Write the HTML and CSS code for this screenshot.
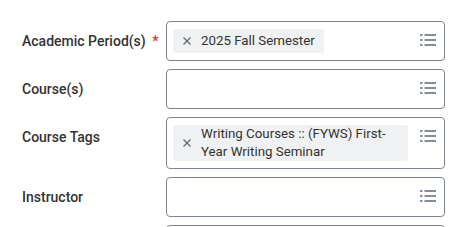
FILE: index.html
```html
<!DOCTYPE html>
<html>
<head>
<meta charset="utf-8">
<link rel="stylesheet" href="styles.css">
</head>
<body>
<div class="form">
  <div class="label">Academic Period(s) <span class="req">*</span></div>
  <div class="input">
    <div class="chips">
      <div class="chip"><svg class="x" viewBox="0 0 8 8" width="8" height="8"><path d="M0.5 0.5L7.5 7.5M7.5 0.5L0.5 7.5" stroke="#5e6a75" stroke-width="1.3"/></svg><span class="chip-text">2025 Fall Semester</span></div>
    </div>
    <svg class="list" viewBox="0 0 16 16" width="16" height="16"><g fill="#5e6a75"><rect x="0" y="2.25" width="2.5" height="1.5"/><rect x="4.5" y="2.25" width="11.5" height="1.5"/><rect x="0" y="7.25" width="2.5" height="1.5"/><rect x="4.5" y="7.25" width="11.5" height="1.5"/><rect x="0" y="12.25" width="2.5" height="1.5"/><rect x="4.5" y="12.25" width="11.5" height="1.5"/></g></svg>
  </div>

  <div class="label">Course(s)</div>
  <div class="input">
    <div class="chips"></div>
    <svg class="list" viewBox="0 0 16 16" width="16" height="16"><g fill="#5e6a75"><rect x="0" y="2.25" width="2.5" height="1.5"/><rect x="4.5" y="2.25" width="11.5" height="1.5"/><rect x="0" y="7.25" width="2.5" height="1.5"/><rect x="4.5" y="7.25" width="11.5" height="1.5"/><rect x="0" y="12.25" width="2.5" height="1.5"/><rect x="4.5" y="12.25" width="11.5" height="1.5"/></g></svg>
  </div>

  <div class="label">Course Tags</div>
  <div class="input">
    <div class="chips">
      <div class="chip"><svg class="x" viewBox="0 0 8 8" width="8" height="8"><path d="M0.5 0.5L7.5 7.5M7.5 0.5L0.5 7.5" stroke="#5e6a75" stroke-width="1.3"/></svg><span class="chip-text">Writing Courses :: (FYWS) First-Year Writing Seminar</span></div>
    </div>
    <svg class="list" viewBox="0 0 16 16" width="16" height="16"><g fill="#5e6a75"><rect x="0" y="2.25" width="2.5" height="1.5"/><rect x="4.5" y="2.25" width="11.5" height="1.5"/><rect x="0" y="7.25" width="2.5" height="1.5"/><rect x="4.5" y="7.25" width="11.5" height="1.5"/><rect x="0" y="12.25" width="2.5" height="1.5"/><rect x="4.5" y="12.25" width="11.5" height="1.5"/></g></svg>
  </div>

  <div class="label">Instructor</div>
  <div class="input">
    <div class="chips"></div>
    <svg class="list" viewBox="0 0 16 16" width="16" height="16"><g fill="#5e6a75"><rect x="0" y="2.25" width="2.5" height="1.5"/><rect x="4.5" y="2.25" width="11.5" height="1.5"/><rect x="0" y="7.25" width="2.5" height="1.5"/><rect x="4.5" y="7.25" width="11.5" height="1.5"/><rect x="0" y="12.25" width="2.5" height="1.5"/><rect x="4.5" y="12.25" width="11.5" height="1.5"/></g></svg>
  </div>

  <div class="label"></div>
  <div class="input"></div>
</div>
</body>
</html>
```
FILE: styles.css
```css
html, body {
  margin: 0;
  padding: 0;
  background: #ffffff;
}
body {
  font-family: Roboto, "Liberation Sans", sans-serif;
  color: #333333;
  overflow: hidden;
}
.form {
  display: grid;
  grid-template-columns: 144px 279px;
  row-gap: 8px;
  padding: 21px 0 0 22px;
}
.label {
  font-size: 14px;
  font-weight: 500;
  line-height: 20px;
  padding-top: 10px;
  color: #333333;
}
.req {
  color: #de2e21;
  margin-left: 3px;
}
.input {
  box-sizing: border-box;
  min-height: 40px;
  border: 1px solid #7b858f;
  border-radius: 4px;
  padding: 7px 8px 7px 6px;
  display: flex;
  align-items: flex-start;
  gap: 12px;
}
.chips {
  flex: 1;
  min-width: 0;
  display: flex;
  flex-wrap: wrap;
}
.chip {
  box-sizing: border-box;
  min-height: 24px;
  background: #f0f1f2;
  border-radius: 3px;
  display: flex;
  align-items: center;
  padding: 0 9px 0 10px;
  font-size: 13.3px;
  line-height: 18px;
  color: #333333;
  max-width: 100%;
}
.x {
  flex: none;
  margin-right: 10px;
}
.list {
  flex: none;
  margin-top: 3px;
}
```
